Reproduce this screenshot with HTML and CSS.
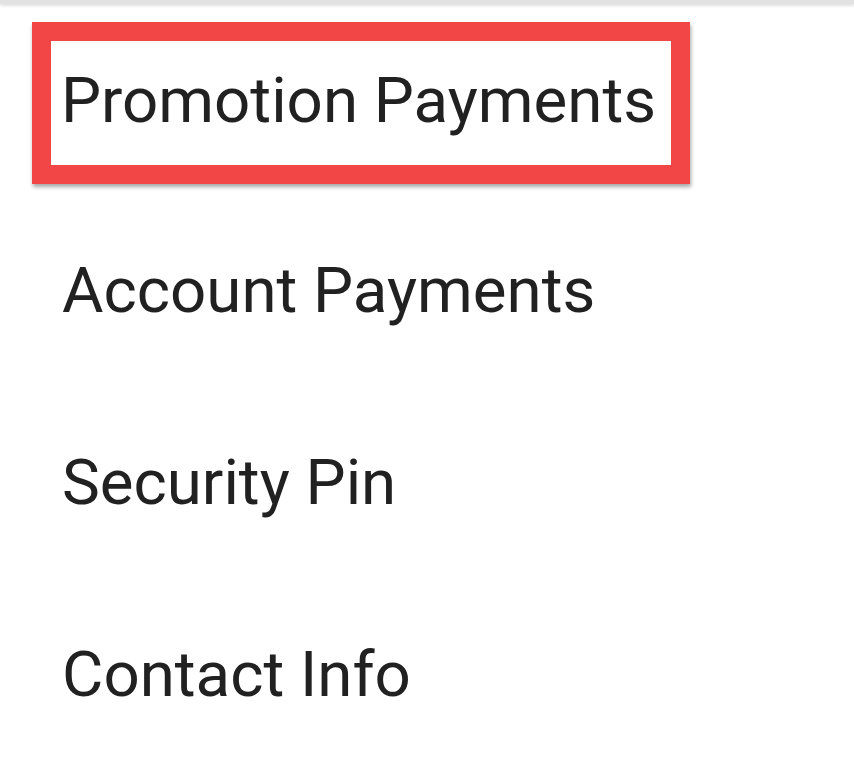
FILE: index.html
```html
<!DOCTYPE html>
<html>
<head>
<meta charset="utf-8">
<title>Settings</title>
<link rel="stylesheet" href="styles.css">
</head>
<body>
<div class="topbar"></div>
<ul class="menu">
  <li class="item highlight"><span class="box">Promotion Payments</span></li>
  <li class="item">Account Payments</li>
  <li class="item">Security Pin</li>
  <li class="item">Contact Info</li>
</ul>
</body>
</html>
```

FILE: styles.css
```css
body
{
	margin:0;
	background:#fff;
	font-family:Roboto, "Noto Sans", sans-serif;
	color:#212121;
}
.topbar
{
	height:4px;
	background:#e2e2e2;
	box-shadow:0 2px 3px rgba(0,0,0,0.12);
}
.menu
{
	list-style:none;
	margin:0;
	padding:0;
}
.item
{
	height:192px;
	display:flex;
	align-items:center;
	padding-left:62px;
	font-size:63.6px;
	line-height:1;
}
.item.highlight
{
	height:191px;
	padding-left:32px;
	align-items:flex-start;
}
.item.highlight .box
{
	margin-top:18px;
	border:19px solid #f24646;
	padding:28px 15px 32px 10px;
	box-shadow:1px 3px 4px rgba(0,0,0,0.35);
}
```
